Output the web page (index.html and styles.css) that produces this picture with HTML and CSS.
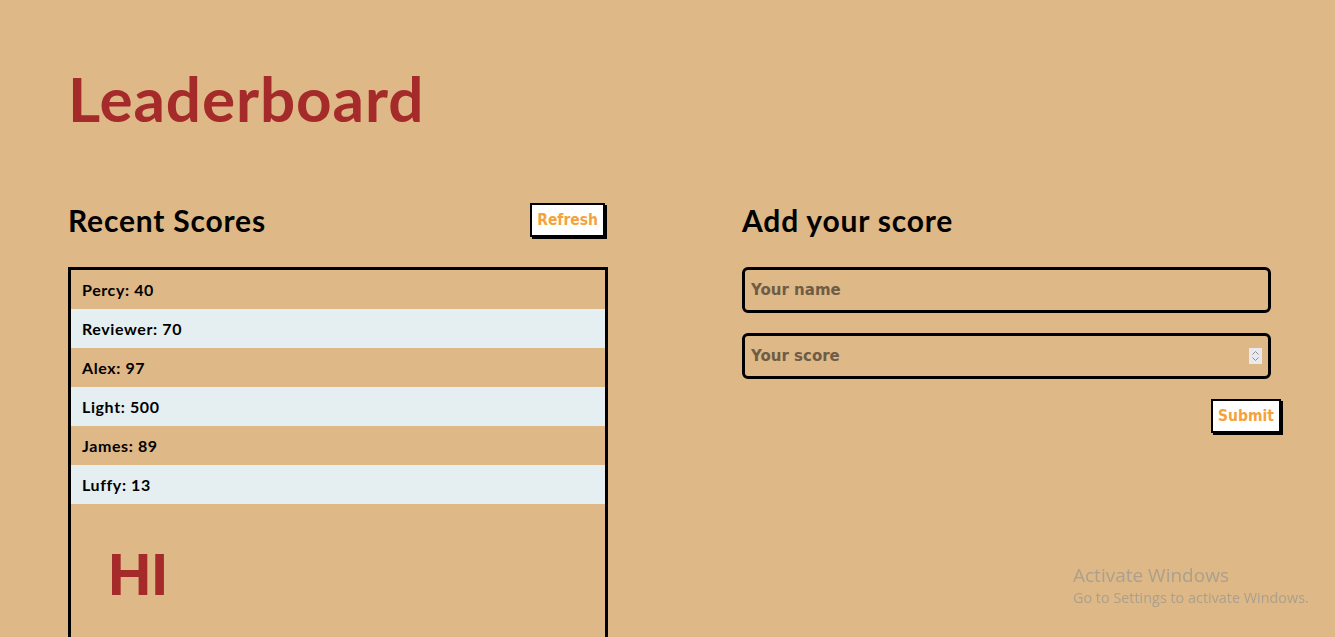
FILE: index.html
```html
<!DOCTYPE html>
<html lang="en">
<head>
<meta charset="utf-8">
<title>Leaderboard</title>
<link rel="stylesheet" href="styles.css">
</head>
<body>
<main class="page">
  <h1 class="title">Leaderboard</h1>
  <div class="columns">
    <section class="col">
      <div class="col-head">
        <h2 class="heading">Recent Scores</h2>
        <button class="btn" type="button">Refresh</button>
      </div>
      <div class="score-box">
        <ul class="scores">
          <li class="score">Percy: 40</li>
          <li class="score">Reviewer: 70</li>
          <li class="score">Alex: 97</li>
          <li class="score">Light: 500</li>
          <li class="score">James: 89</li>
          <li class="score">Luffy: 13</li>
        </ul>
        <p class="hi">HI</p>
      </div>
    </section>
    <section class="col">
      <div class="col-head">
        <h2 class="heading">Add your score</h2>
      </div>
      <form class="form">
        <input class="field" type="text" placeholder="Your name">
        <div class="field-wrap">
          <input class="field" type="number" placeholder="Your score">
          <span class="spinner" aria-hidden="true">
            <svg width="13" height="16" viewBox="0 0 13 16">
              <path d="M3.5 6.5 L6.5 3.5 L9.5 6.5" fill="none" stroke="#8c8c94" stroke-width="1"/>
              <path d="M3.5 9.5 L6.5 12.5 L9.5 9.5" fill="none" stroke="#8c8c94" stroke-width="1"/>
            </svg>
          </span>
        </div>
        <button class="btn" type="button">Submit</button>
      </form>
    </section>
  </div>
</main>
<div class="watermark">
  <div class="wm-title">Activate Windows</div>
  <div class="wm-sub">Go to Settings to activate Windows.</div>
</div>
</body>
</html>
```
FILE: styles.css
```css
html, body {
  margin: 0;
  padding: 0;
  background: #deb887;
  height: 100%;
  overflow: hidden;
}

body {
  font-family: "Trebuchet MS", "Lato", "Open Sans", sans-serif;
  color: #000;
}

.page {
  padding: 0 0 0 68px;
  width: 1214px;
}

.title {
  margin: 0;
  padding-top: 62px;
  font-size: 62px;
  line-height: 72px;
  font-weight: 700;
  letter-spacing: 0.9px;
  color: #a52a2a;
}

.columns {
  display: flex;
  justify-content: space-between;
  margin-top: 69px;
}

.col {
  width: 540px;
}

.col-head {
  display: flex;
  justify-content: space-between;
  align-items: center;
  height: 34px;
  margin-bottom: 30px;
}

.heading {
  margin: 0;
  font-size: 30px;
  font-weight: 700;
  letter-spacing: 0.8px;
  line-height: 34px;
}

.btn {
  box-sizing: border-box;
  background: #fff;
  border: 2px solid #000;
  box-shadow: 2px 2px 0 #000;
  color: #f4a23a;
  font-family: "DejaVu Sans Condensed", "DejaVu Sans", Tahoma, sans-serif;
  font-weight: 700;
  font-size: 15.5px;
  padding: 0 5px;
  height: 34px;
  margin-right: 3px;
  cursor: pointer;
}

.score-box {
  border: 3px solid #000;
  width: 534px;
  height: 420px;
}

.scores {
  list-style: none;
  margin: 0;
  padding: 0;
}

.score {
  height: 39px;
  line-height: 39px;
  padding-left: 11px;
  font-size: 16px;
  font-weight: 700;
  letter-spacing: 0.6px;
}

.score:nth-child(even) {
  background: #e5eff1;
}

.hi {
  margin: 0;
  padding: 31px 0 0 37px;
  font-family: "Liberation Sans", Arial, sans-serif;
  font-weight: 700;
  font-size: 60px;
  line-height: 80px;
  color: #a52a2a;
}

.form {
  display: flex;
  flex-direction: column;
  gap: 20px;
  align-items: flex-start;
}

.field-wrap {
  position: relative;
}

.field {
  box-sizing: border-box;
  width: 529px;
  height: 46px;
  border: 3px solid #000;
  border-radius: 6px;
  background: transparent;
  padding: 0 6px;
  font-family: "DejaVu Sans", Tahoma, sans-serif;
  font-weight: 700;
  font-size: 15px;
  color: #000;
  -moz-appearance: textfield;
}

.field::placeholder {
  color: #6e5c46;
}

.field::-webkit-inner-spin-button,
.field::-webkit-outer-spin-button {
  -webkit-appearance: none;
  margin: 0;
}

.spinner {
  position: absolute;
  right: 9px;
  top: 15px;
  width: 13px;
  height: 16px;
  background: #e9e9ee;
  display: block;
}

.spinner svg {
  display: block;
}

.form .btn {
  align-self: flex-end;
  margin-right: 1px;
}

.watermark {
  position: fixed;
  left: 1073px;
  top: 563px;
  font-family: "Open Sans", "Noto Sans", sans-serif;
  color: #aba08c;
}

.wm-title {
  font-size: 19px;
  line-height: 25px;
}

.wm-sub {
  font-size: 14.4px;
  line-height: 20px;
}
```
